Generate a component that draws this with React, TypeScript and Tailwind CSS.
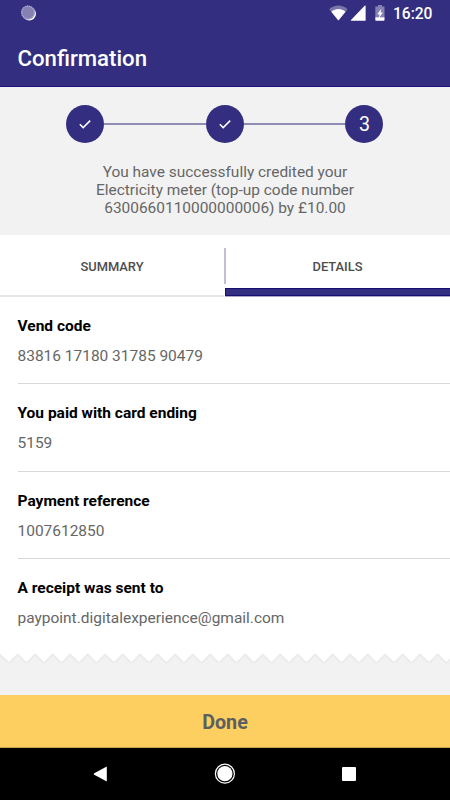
import { Fragment } from 'react';

const steps = ['check', 'check', '3'];

const details = [
    { label: 'Vend code', value: '83816 17180 31785 90479' },
    { label: 'You paid with card ending', value: '5159' },
    { label: 'Payment reference', value: '1007612850' },
    { label: 'A receipt was sent to', value: 'paypoint.digitalexperience@gmail.com' }
];

// One tooth every 17.5px, starting from a notch at the left edge
const teeth = Array.from({ length: 26 }, (_, i) => `L${i * 17.5 + 9} 9 L${(i + 1) * 17.5 + 0.2} 0.2`).join(' ');

function StatusBar() {
    return (
        <div className="flex h-7 items-center justify-between pl-[21px] pr-[17.5px]">
            <svg className="-mt-0.5 h-4 w-4" viewBox="0 0 16 16" fill="none">
                <circle cx="8.3" cy="8.7" r="6.7" fill="#fff" />
                <circle cx="7" cy="7.5" r="6.9" fill="#8581b3" />
                <circle cx="7" cy="7.5" r="6.3" stroke="#b3b0d0" strokeWidth="1.3" strokeDasharray="1 1" />
            </svg>
            <div className="flex items-center">
                <svg className="-mt-0.5 h-4 w-[19px]" viewBox="0 0 19 16">
                    <path d="M0.2 4.2C5.6 -0.6 13.2 -0.6 18.6 4.2L9.4 15.6Z" fill="#7a76ab" />
                    <path d="M2.3 6.7C6.5 3.1 12.3 3.1 16.5 6.7L9.4 15.6Z" fill="#fff" />
                </svg>
                <svg className="-mt-0.5 ml-0.5 h-4 w-4" viewBox="0 0 16 16" fill="#fff">
                    <path d="M15.6 0.8V15.8H1.4Q0.2 15.8 1 14.9L14.4 1Q15.1 0.3 15.6 0.8Z" />
                </svg>
                <svg className="-mt-0.5 ml-[9px] h-4 w-2.5" viewBox="0 0 10 16">
                    <path d="M3 0H7V1.5H9.5V12.6H0.3V1.5H3Z" fill="#8581b3" />
                    <path d="M0.3 12.3H9.5V15Q9.5 15.8 8.8 15.8H1Q0.3 15.8 0.3 15Z" fill="#fff" />
                    <path d="M6.3 3.8L2.3 9.2H4.5L4 12.9L7.8 7.6H5.6Z" fill="#fff" />
                </svg>
                <span className="ml-2 w-10 whitespace-nowrap text-right text-[15.6px] font-medium leading-7">16:20</span>
            </div>
        </div>
    );
}

function Stepper() {
    return (
        <div className="flex items-center pl-[66.3px] pr-[66.6px]">
            {steps.map((step, index) => (
                <Fragment key={index}>
                    {index > 0 && <div className="h-0.5 flex-1 bg-[#8e8cb3]" />}
                    <div className="flex h-[38px] w-[38px] items-center justify-center rounded-full bg-[#332e80] text-white">
                        {step === 'check' ? (
                            <svg className="h-3 w-3" viewBox="0 0 12 12" fill="none" stroke="#fff" strokeWidth="1.5">
                                <path d="M0.8 6.2L4.2 9.6L11.2 2.6" />
                            </svg>
                        ) : (
                            <span className="pt-0.5 text-[19.7px] leading-none">{step}</span>
                        )}
                    </div>
                </Fragment>
            ))}
        </div>
    );
}

export default function App() {
    return (
        <div className="flex h-[800px] w-[450px] flex-col overflow-hidden bg-[#f2f2f2] font-['Roboto',sans-serif] text-[#666]">
            <header className="h-[87px] border-b border-[#1c1580] bg-[#332e80] text-white">
                <StatusBar />
                <h1 className="pl-[17.5px] text-[22.2px] font-medium leading-[60px]">Confirmation</h1>
            </header>

            <section className="h-[148px] pt-[18px]">
                <Stepper />
                <p className="mt-[20px] text-center text-[15.45px] leading-[18px]">
                    You have successfully credited your
                    <br />
                    Electricity meter (top-up code number
                    <br />
                    6300660110000000006) by £10.00
                </p>
            </section>

            <nav className="flex h-[62px] bg-white text-[12.9px] font-medium text-[#4d4d4d]">
                <div className="flex w-[224px] flex-col border-b-2 border-[#e6e6e6]">
                    <span className="pt-[22px] text-center leading-5">SUMMARY</span>
                </div>
                <div className="mt-[13px] h-9 w-0.5 bg-[#c1bfd5]" />
                <div className="-ml-px flex flex-1 flex-col justify-between">
                    <span className="pt-[22px] text-center leading-5">DETAILS</span>
                    <div className="mb-px h-2 border border-r-0 border-[#160f70] bg-[#332e80] shadow-[0_1px_0_#aaa5cb]" />
                </div>
            </nav>

            <main className="h-[356px] bg-white pl-[17.5px]">
                {details.map((item) => (
                    <div key={item.label} className="h-[87.5px] pt-[18.5px]">
                        <h2 className="text-[15.5px] font-bold leading-5 text-black">{item.label}</h2>
                        <p className="mt-2.5 text-[15.48px] leading-5">{item.value}</p>
                        {item !== details[details.length - 1] && <div className="mt-[17.5px] h-px bg-[#d9d9d9]" />}
                    </div>
                ))}
            </main>

            {/* Torn receipt edge */}
            <svg className="h-[42px] w-full shrink-0" viewBox="0 0 450 42">
                <path d={`M0 -2 V0.7 ${teeth} V-2Z`} fill="none" stroke="#ebebeb" strokeWidth="4" />
                <path d="M0 10H450V14H0Z" fill="#f2f2f2" />
                <path d={`M0 -2 V0.7 ${teeth} V-2Z`} fill="#fff" />
            </svg>

            <button className="h-[53px] border-b border-[#c9a44e] bg-[#fdcf61] pt-[3px] text-[19.7px] font-bold text-[#5c5f60]">Done</button>

            <footer className="flex h-[52px] items-center justify-between bg-black pl-[93px] pr-[94px]">
                <svg className="h-4 w-3.5" viewBox="0 0 14 16" fill="#fff">
                    <path d="M13.8 0.5V15.5L0.8 8.5V7.5Z" />
                </svg>
                <svg className="h-[22px] w-[22px]" viewBox="0 0 22 22">
                    <circle cx="10.9" cy="10.7" r="9.5" fill="none" stroke="#fff" strokeWidth="1.2" />
                    <circle cx="10.9" cy="10.7" r="7.6" fill="#fff" />
                </svg>
                <div className="h-3.5 w-3.5 rounded-[1px] bg-white" />
            </footer>
        </div>
    );
}
